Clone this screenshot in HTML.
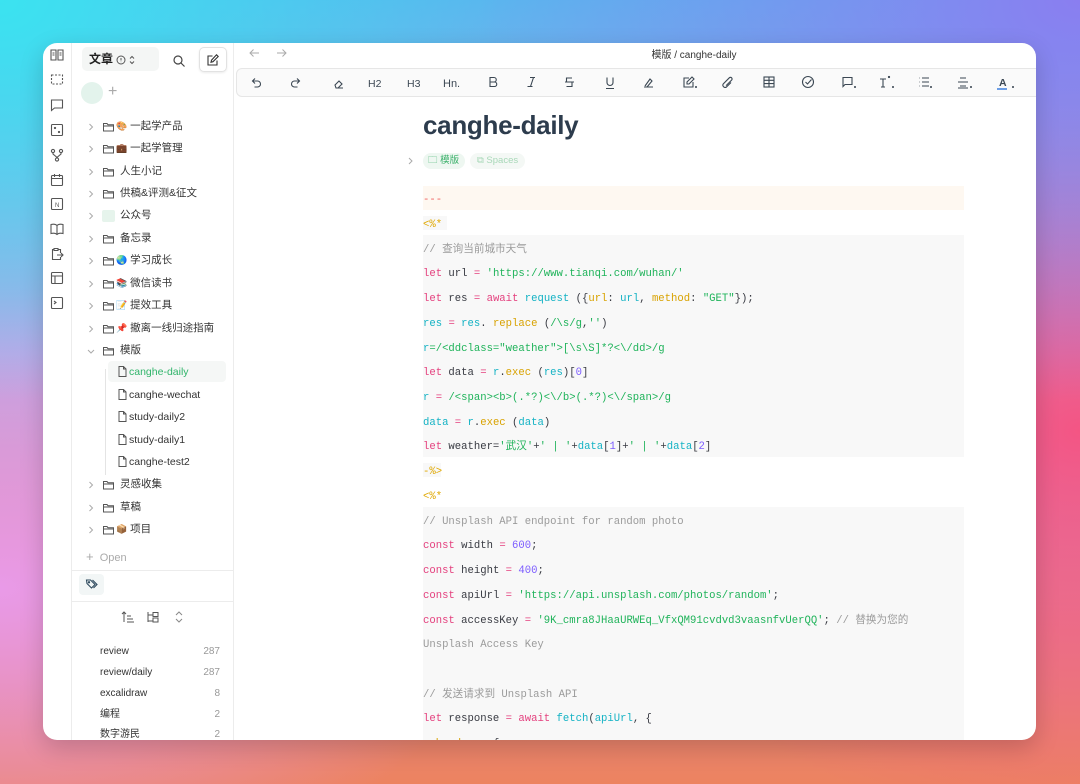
<!DOCTYPE html>
<html><head><meta charset="utf-8"><style>
*{box-sizing:border-box;margin:0;padding:0}
body{width:1080px;height:784px;overflow:hidden;position:relative;font-family:"Liberation Sans","Noto Sans CJK SC",sans-serif;
background:
radial-gradient(ellipse 500px 400px at 0% 0%,#3be3f0 0%,rgba(59,227,240,0) 100%),
radial-gradient(ellipse 600px 400px at 100% 0%,#8a7ef0 0%,rgba(138,126,240,0) 100%),
radial-gradient(ellipse 500px 400px at 100% 55%,#f45584 0%,rgba(244,85,132,0) 100%),
radial-gradient(ellipse 500px 300px at 0% 75%,#e99ae8 0%,rgba(233,154,232,0) 100%),
linear-gradient(180deg,#5ab6ee 0%,#b6a8e6 45%,#e4838a 80%,#ec8360 100%);}
.win{position:absolute;left:43px;top:43px;width:993px;height:697px;background:#fff;border-radius:14px;overflow:hidden;box-shadow:0 8px 24px rgba(0,0,0,.18)}
.rail{position:absolute;left:0;top:0;width:29px;height:100%;border-right:1px solid #ececec}
.rail svg{position:absolute;left:6px}
.side{position:absolute;left:29px;top:0;width:162px;height:100%;border-right:1px solid #ececec}
.abs{position:absolute}
.item{position:absolute;left:0;height:20px;font-size:10.5px;color:#333;line-height:20px;white-space:nowrap}
.tags div{position:absolute;left:28px;font-size:10px;line-height:14px;height:14px;color:#333;width:120px}
.tags span{position:absolute;right:0;color:#999}
.main{position:absolute;left:191px;top:0;right:0;height:100%}
.code{position:absolute;left:380px;width:541px;font-family:"Liberation Mono","Noto Sans CJK SC",monospace;font-size:10.6px;white-space:pre;color:#383a42}
.ln{position:absolute;left:0;height:14px;line-height:14px}
.k{color:#e4407e}.s{color:#1fb35a}.c{color:#13b2c4}.y{color:#d8a200}.p{color:#7c5cff}.g{color:#9b9b9b}.d{color:#e0a800}
</style></head><body>
<div class="win">
<div class="rail">
<svg style="top:4px" width="16" height="16" viewBox="0 0 16 16" fill="none" stroke="#555" stroke-width="1.1"><path d="M2 3h5v10H2zM9 3h5v10H9z"/><path d="M3.5 6h2M10.5 6h2M3.5 8h2M10.5 8h2"/></svg>
<svg style="top:29px" width="16" height="16" viewBox="0 0 16 16" fill="none" stroke="#555" stroke-width="1.1" stroke-dasharray="2 1.5"><rect x="2.5" y="3" width="11" height="9"/></svg>
<svg style="top:54px" width="16" height="16" viewBox="0 0 16 16" fill="none" stroke="#555" stroke-width="1.1"><path d="M2.5 3h11v8h-8l-3 2.5z"/></svg>
<svg style="top:79px" width="16" height="16" viewBox="0 0 16 16" fill="none" stroke="#555" stroke-width="1.1"><rect x="2.5" y="2.5" width="11" height="11" rx="1"/><circle cx="6" cy="6" r=".6"/><circle cx="10" cy="10" r=".6"/></svg>
<svg style="top:104px" width="16" height="16" viewBox="0 0 16 16" fill="none" stroke="#555" stroke-width="1.1"><circle cx="4" cy="4" r="1.6"/><circle cx="12" cy="4" r="1.6"/><circle cx="8" cy="12.5" r="1.6"/><path d="M4 5.6v1.4l4 3.4 4-3.4V5.6"/></svg>
<svg style="top:129px" width="16" height="16" viewBox="0 0 16 16" fill="none" stroke="#555" stroke-width="1.1"><rect x="2.5" y="3.5" width="11" height="10" rx="1"/><path d="M2.5 6.5h11M5.5 2v3M10.5 2v3"/></svg>
<svg style="top:153px" width="16" height="16" viewBox="0 0 16 16" fill="none" stroke="#555" stroke-width="1.1"><rect x="2.5" y="2.5" width="11" height="11" rx="1"/><text x="6" y="11" font-size="6" fill="#555" stroke="none">N</text></svg>
<svg style="top:178px" width="16" height="16" viewBox="0 0 16 16" fill="none" stroke="#555" stroke-width="1.1"><path d="M8 4.5C6.5 3 4 3 2 3.5v9c2-.5 4.5-.5 6 1 1.5-1.5 4-1.5 6-1v-9c-2-.5-4.5-.5-6 1zM8 4.5v9"/></svg>
<svg style="top:203px" width="16" height="16" viewBox="0 0 16 16" fill="none" stroke="#555" stroke-width="1.1"><path d="M5 3.5H3.5v10h8V11M5 2.5h4v2H5zM9 3.5h2.5V7M8 9h6M12 7l2 2-2 2"/></svg>
<svg style="top:227px" width="16" height="16" viewBox="0 0 16 16" fill="none" stroke="#555" stroke-width="1.1"><rect x="2.5" y="2.5" width="11" height="11" rx="1"/><path d="M2.5 6h11M6 6v7.5"/></svg>
<svg style="top:252px" width="16" height="16" viewBox="0 0 16 16" fill="none" stroke="#555" stroke-width="1.1"><rect x="2.5" y="2.5" width="11" height="11" rx="1"/><path d="M5 6l2 1.5L5 9"/></svg>
</div>
<div class="side">
<div class="abs" style="left:10px;top:4px;width:77px;height:24px;background:#f4f6f5;border-radius:5px"></div>
<div class="abs" style="left:17px;top:8px;font-size:12px;line-height:16px;font-weight:bold;color:#222">文章</div>
<svg class="abs" style="left:44px;top:11px" width="22" height="12" viewBox="0 0 22 12" fill="none" stroke="#555" stroke-width="1"><circle cx="5" cy="6" r="4"/><path d="M5 4v2.5M5 7.8v.3"/><path d="M14 4.5l2-2 2 2M14 7.5l2 2 2-2"/></svg>
<svg class="abs" style="left:100px;top:11px" width="14" height="14" viewBox="0 0 14 14" fill="none" stroke="#444" stroke-width="1.2"><circle cx="6" cy="6" r="4"/><path d="M9 9l3.5 3.5"/></svg>
<div class="abs" style="left:127px;top:4px;width:28px;height:25px;border:1px solid #e2e2e2;border-radius:5px;box-shadow:0 1px 2px rgba(0,0,0,.08)"></div>
<svg class="abs" style="left:134px;top:10px" width="14" height="14" viewBox="0 0 14 14" fill="none" stroke="#333" stroke-width="1.1"><path d="M11 7.5V12H2V3h4.5"/><path d="M10.5 1.8l1.7 1.7L7 8.7 5 9.2l.5-2z"/></svg>
<div class="abs" style="left:9px;top:39px;width:22px;height:22px;border-radius:50%;background:#e3f3ec"></div>
<div class="abs" style="left:36px;top:40px;font-size:16px;color:#aaa">+</div>

<div class="abs" style="left:36px;top:318px;width:118px;height:21px;background:#f5f7f6;border-radius:4px"></div>
<div class="abs" style="left:33px;top:326px;width:1px;height:106px;background:#e4e4e4"></div>
<div id="tree"></div>
<div class="abs" style="left:14px;top:506px;font-size:11px;color:#aaa"><span style="font-size:13px">+</span>&nbsp; Open</div>
<div class="abs" style="left:0;top:527px;width:162px;height:1px;background:#ececec"></div>
<div class="abs" style="left:7px;top:531px;width:25px;height:21px;background:#f2f6f6;border-radius:4px"></div>
<svg class="abs" style="left:13px;top:535px" width="14" height="13" viewBox="0 0 14 13" fill="none" stroke="#2f4a5e" stroke-width="1.1"><path d="M1.5 2h4l4.5 4.5-3.5 3.5L2 5.5z"/><path d="M7.5 2l4.5 4.5L8.5 10"/><circle cx="4" cy="4.3" r=".6"/></svg>
<div class="abs" style="left:0;top:558px;width:162px;height:1px;background:#ececec"></div>
<svg class="abs" style="left:49px;top:567px" width="14" height="14" viewBox="0 0 14 14" fill="none" stroke="#555" stroke-width="1"><path d="M3 12V2M1 4l2-2 2 2M6 6h4M6 9h6M6 12h7"/></svg>
<svg class="abs" style="left:74px;top:567px" width="14" height="14" viewBox="0 0 14 14" fill="none" stroke="#555" stroke-width="1"><path d="M2 2v10M2 5h5M2 11h5"/><rect x="7" y="2.5" width="5" height="4"/><rect x="7" y="8" width="5" height="4"/></svg>
<svg class="abs" style="left:101px;top:567px" width="12" height="14" viewBox="0 0 12 14" fill="none" stroke="#888" stroke-width="1"><path d="M3 5l3-3 3 3M3 9l3 3 3-3"/></svg>
<div class="tags">
<div style="top:602px">review<span>287</span></div>
<div style="top:623px">review/daily<span>287</span></div>
<div style="top:644px">excalidraw<span>8</span></div>
<div style="top:665px">编程<span>2</span></div>
<div style="top:685px">数字游民<span>2</span></div>
</div>
</div>

<div class="main">
<svg class="abs" style="left:14px;top:4px" width="40" height="12" viewBox="0 0 40 12" fill="none" stroke="#aaa" stroke-width="1"><path d="M11 6H2M5.5 2.5L2 6l3.5 3.5M29 6h9M34.5 2.5L38 6l-3.5 3.5"/></svg>
<div class="abs" style="left:0;width:802px;top:3px;text-align:center;font-size:10px;color:#333;padding-left:118px">模版 / canghe-daily</div>
<div class="abs" style="left:2px;top:25px;width:820px;height:29px;background:#fafafa;border:1px solid #e6e6e6;border-radius:6px"></div>
<svg class="abs" style="left:0;top:25px" width="802" height="29" viewBox="0 0 802 29" fill="none" stroke="#3b4753" stroke-width="1.1" font-family="Liberation Sans" >
<path d="M21 10.5l-2.5 2.5 2.5 2.5M18.5 13h5a3 3 0 010 6h-3"/>
<path d="M63 10.5l2.5 2.5-2.5 2.5M65.5 13h-5a3 3 0 000 6h3"/>
<path d="M101 17l4-4 3 3-4 4h-2zM104 20h5"/>
<text x="134" y="19" font-size="10.5" fill="#3b4753" stroke="none">H2</text>
<text x="173" y="19" font-size="10.5" fill="#3b4753" stroke="none">H3</text>
<text x="209" y="19" font-size="11" fill="#3b4753" stroke="none">Hn.</text>
<path d="M256 9.5h4a2 2 0 010 4.5h-4zM256 14h4.5a2.2 2.2 0 010 4.5H256z"/>
<path d="M296 9.5h5M293.5 18.5h5M299.5 9.5l-3 9"/>
<path d="M338 10h-5.5v4h5.5v4.5h-5.5M331 14h9"/>
<path d="M373 9.5v5a3 3 0 006 0v-5M372 20.5h8"/>
<path d="M410 19h9M411 18l5-7 2 2-5 6"/>
<path d="M455 10h-5v9h9v-5M458 9l2 2-5 5h-2v-2z"/><circle cx="462" cy="19" r=".5"/>
<path d="M497 14.5l-4.5 4.5a2.3 2.3 0 01-3.2-3.2l6-6a1.6 1.6 0 012.3 2.3l-5.5 5.5"/>
<rect x="530" y="9" width="10" height="10"/><path d="M530 12.3h10M530 15.6h10M535 9v10"/>
<circle cx="574" cy="14" r="5.5"/><path d="M571.5 14l2 2 4-4.5"/>
<path d="M609 9.5h9v7h-7l-2 2z"/><circle cx="621" cy="19" r=".5"/>
<path d="M646 11h6M649 11v8M647 19h4"/><circle cx="655" cy="9" r=".6"/><circle cx="659" cy="19" r=".5"/>
<path d="M688 10h7M688 14h7M688 18h7M685.5 10h.5M685.5 14h.5M685.5 18h.5"/><circle cx="697" cy="19" r=".5"/>
<path d="M726 10h6M724 14h10M726 18h6M724 20h10"/><circle cx="737" cy="19" r=".5"/>
<text x="765" y="18" font-size="10.5" font-weight="bold" fill="#3b4753" stroke="none">A</text>
<path d="M763 21h10" stroke="#3d7fe0" stroke-width="1.6"/><circle cx="779" cy="19" r=".5"/>
</svg>
<div class="abs" style="left:189px;top:67px;font-size:26px;font-weight:bold;color:#2d3c4d;letter-spacing:-0.3px">canghe-daily</div>
<svg class="abs" style="left:173px;top:113px" width="8" height="10" viewBox="0 0 8 10" fill="none" stroke="#aaa" stroke-width="1"><path d="M2 2l3 3-3 3"/></svg>
<div class="abs" style="left:189px;top:110px;width:42px;height:16px;background:#eef7f1;border-radius:8px;font-size:9.5px;color:#3bb06a;line-height:16px;padding-left:5px">🗀 模版</div>
<div class="abs" style="left:236px;top:110px;width:55px;height:16px;background:#f4f8f5;border-radius:8px;font-size:9.5px;color:#a8d8b8;line-height:16px;padding-left:7px">⧉ Spaces</div>

<div class="abs" style="left:189px;top:143px;width:541px;height:24px;background:#fef8f1"></div>
<div class="abs" style="left:189px;top:192px;width:541px;height:222px;background:#f8f8f8"></div>
<div class="abs" style="left:189px;top:464px;width:541px;height:240px;background:#f8f8f8"></div>
<div class="abs" style="left:189px;top:173px;width:24px;height:14px;background:#f8f8f8"></div>
<div class="abs" style="left:189px;top:420px;width:18px;height:14px;background:#f8f8f8"></div>

<div class="code" style="left:189px;top:2px">
<div class="ln" style="top:148px;color:#f06060">---</div>
<div class="ln d" style="top:173px">&lt;%*</div>
<div class="ln g" style="top:198px">// 查询当前城市天气</div>
<div class="ln" style="top:222px"><span class="k">let</span> url <span class="k">=</span> <span class="s">'https://www.tianqi.com/wuhan/'</span></div>
<div class="ln" style="top:247px"><span class="k">let</span> res <span class="k">=</span> <span class="k">await</span> <span class="c">request</span> ({<span class="y">url</span>: <span class="c">url</span>, <span class="y">method</span>: <span class="s">"GET"</span>});</div>
<div class="ln" style="top:272px"><span class="c">res</span> <span class="k">=</span> <span class="c">res</span>. <span class="y">replace</span> (<span class="s">/\s/g</span>,<span class="s">''</span>)</div>
<div class="ln s" style="top:297px"><span class="c">r</span>=/&lt;ddclass="weather"&gt;[\s\S]*?&lt;\/dd&gt;/g</div>
<div class="ln" style="top:321px"><span class="k">let</span> data <span class="k">=</span> <span class="c">r</span>.<span class="y">exec</span> (<span class="c">res</span>)[<span class="p">0</span>]</div>
<div class="ln" style="top:346px"><span class="c">r</span> <span class="k">=</span> <span class="s">/&lt;span&gt;&lt;b&gt;(.*?)&lt;\/b&gt;(.*?)&lt;\/span&gt;/g</span></div>
<div class="ln" style="top:371px"><span class="c">data</span> <span class="k">=</span> <span class="c">r</span>.<span class="y">exec</span> (<span class="c">data</span>)</div>
<div class="ln" style="top:395px"><span class="k">let</span> weather=<span class="s">'武汉'</span>+<span class="s">' | '</span>+<span class="c">data</span>[<span class="p">1</span>]+<span class="s">' | '</span>+<span class="c">data</span>[<span class="p">2</span>]</div>
<div class="ln d" style="top:420px">-%&gt;</div>
<div class="ln d" style="top:445px">&lt;%*</div>
<div class="ln g" style="top:470px">// Unsplash API endpoint for random photo</div>
<div class="ln" style="top:494px"><span class="k">const</span> width <span class="k">=</span> <span class="p">600</span>;</div>
<div class="ln" style="top:519px"><span class="k">const</span> height <span class="k">=</span> <span class="p">400</span>;</div>
<div class="ln" style="top:544px"><span class="k">const</span> apiUrl <span class="k">=</span> <span class="s">'https://api.unsplash.com/photos/random'</span>;</div>
<div class="ln" style="top:569px"><span class="k">const</span> accessKey <span class="k">=</span> <span class="s">'9K_cmra8JHaaURWEq_VfxQM91cvdvd3vaasnfvUerQQ'</span>; <span class="g">// 替换为您的</span></div>
<div class="ln g" style="top:593px">Unsplash Access Key</div>
<div class="ln g" style="top:643px">// 发送请求到 Unsplash API</div>
<div class="ln" style="top:667px"><span class="k">let</span> response <span class="k">=</span> <span class="k">await</span> <span class="c">fetch</span>(<span class="c">apiUrl</span>, {</div>
<div class="ln" style="top:692px">  <span class="y">headers</span>: {</div>
</div>
</div>
</div>
<script>
var items=[["一起学产品","🎨",0],["一起学管理","💼",0],["人生小记","",0],["供稿&评测&征文","",0],["公众号","",2],["备忘录","",0],["学习成长","🌏",0],["微信读书","📚",0],["提效工具","📝",0],["撤离一线归途指南","📌",0],["模版","",1],["canghe-daily","",3],["canghe-wechat","",4],["study-daily2","",4],["study-daily1","",4],["canghe-test2","",4],["灵感收集","",0],["草稿","",0],["项目","📦",0]];
var h="",tops=[73,95,118,140,162,185,207,230,252,275,297,319,342,364,387,409,431,454,476];
var fold='<svg width="13" height="12" viewBox="0 0 13 12" fill="none" stroke="#555" stroke-width="1"><path d="M1.5 2.5h3.5l1 1.2h5.5v6.3h-10z"/><path d="M1.5 5h10"/></svg>';
var file='<svg width="11" height="13" viewBox="0 0 11 13" fill="none" stroke="#555" stroke-width="1"><path d="M2 1.5h4.5l2.5 2.5v7.5H2z"/><path d="M6.5 1.5V4H9"/></svg>';
items.forEach(function(it,i){var t=tops[i];
 if(it[2]>=3){h+='<div class="item" style="top:'+t+'px;left:45px"><span style="position:absolute;left:0;top:3px">'+file+'</span><span style="position:absolute;left:12px;'+(it[2]==3?'color:#30b46a':'')+'">'+it[0]+'</span></div>';return;}
 var chev=it[2]==1?'<path d="M2 4l3 3 3-3"/>':'<path d="M3.5 2l3 3-3 3"/>';
 var ic=it[2]==2?'<span style="display:inline-block;width:13px;height:12px;background:#e6f4ec;border-radius:2px"></span>':fold;
 h+='<div class="item" style="top:'+t+'px"><svg style="position:absolute;left:14px;top:6px" width="10" height="10" viewBox="0 0 10 10" fill="none" stroke="#aaa" stroke-width="1">'+chev+'</svg><span style="position:absolute;left:30px;top:4px">'+ic+'</span><span style="position:absolute;left:'+(it[1]?44:48)+'px">'+(it[1]?'<span style="font-size:9px">'+it[1]+'</span> ':'')+it[0]+'</span></div>';});
document.getElementById('tree').innerHTML=h;
</script>
</body></html>
